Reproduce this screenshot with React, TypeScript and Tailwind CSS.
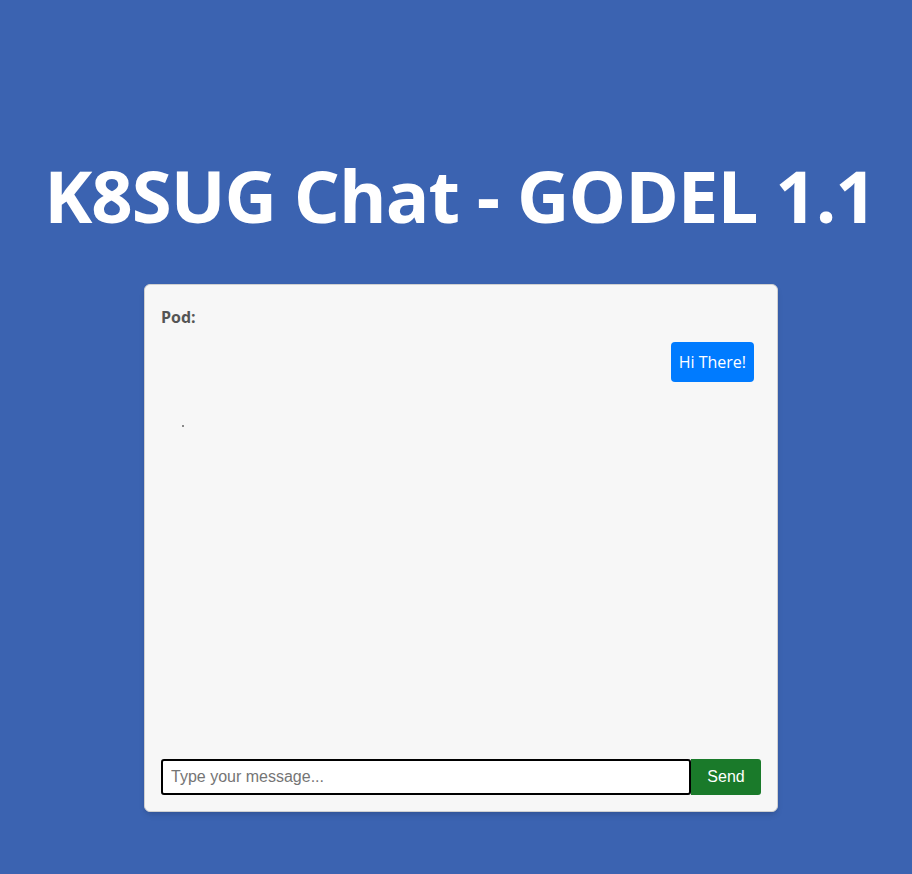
import React, { useState } from 'react';

export default function App() {
  const [text, setText] = useState('');

  return (
    <div className="min-h-screen w-full bg-[#3b63b1] flex flex-col items-center pl-[10px]" style={{ fontFamily: '"Open Sans", "Noto Sans", sans-serif' }}>
      <h1 className="mt-[149px] text-[72.5px] leading-[92px] font-bold text-white tracking-[-1px] whitespace-nowrap pr-[2px]">K8SUG Chat - GODEL 1.1</h1>

      <div className="mt-[43px] w-[634px] h-[528px] bg-[#f7f7f7] border border-[#d0d0d0] rounded-md shadow-md flex flex-col px-4 pt-[22px] pb-4">
        <div className="text-[16px] font-bold text-[#555] leading-5">Pod:</div>

        <div className="flex-1 flex flex-col">
          <div className="mt-[15px] flex justify-end pr-[7px]">
            <div className="bg-[#007bff] text-white text-[16px] leading-6 px-2 py-2 h-10 rounded">Hi There!</div>
          </div>
          <div className="mt-[43px] ml-[21px] w-[2px] h-[2px] bg-[#666] rounded-full" />
        </div>

        <div className="flex h-9">
          <input
            autoFocus
            value={text}
            onChange={(e) => setText(e.target.value)}
            placeholder="Type your message..."
            className="flex-1 h-9 border-2 border-black rounded-[3px] bg-white px-2 text-[16px] text-black placeholder:text-[#757575] outline-none"
            style={{ fontFamily: '"Liberation Sans", Arial, sans-serif' }}
          />
          <button
            className="w-[70px] h-9 bg-[#1a7a2a] text-white text-[16px] rounded-r-[3px]"
            style={{ fontFamily: '"Liberation Sans", Arial, sans-serif' }}
          >
            Send
          </button>
        </div>
      </div>
    </div>
  );
}
